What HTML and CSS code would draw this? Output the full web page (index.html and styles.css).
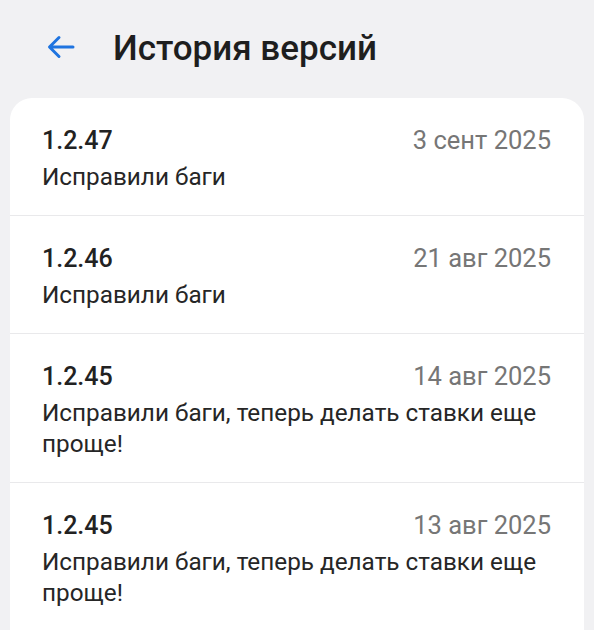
FILE: index.html
```html
<!DOCTYPE html>
<html lang="ru">
<head>
  <meta charset="utf-8">
  <title>История версий</title>
  <link rel="stylesheet" href="styles.css">
</head>
<body>
  <div class="topbar">
    <svg class="back" width="30" height="26" viewBox="0 0 30 26">
      <path d="M27 13H4M13 3.5L3.5 13L13 22.5" fill="none" stroke="#1f74e0" stroke-width="3" stroke-linecap="round" stroke-linejoin="round"/>
    </svg>
    <h1 class="title">История версий</h1>
  </div>

  <div class="card">
    <div class="item">
      <div class="item-head">
        <span class="ver">1.2.47</span>
        <span class="date">3 сент 2025</span>
      </div>
      <p class="desc">Исправили баги</p>
    </div>
    <div class="item">
      <div class="item-head">
        <span class="ver">1.2.46</span>
        <span class="date">21 авг 2025</span>
      </div>
      <p class="desc">Исправили баги</p>
    </div>
    <div class="item">
      <div class="item-head">
        <span class="ver">1.2.45</span>
        <span class="date">14 авг 2025</span>
      </div>
      <p class="desc">Исправили баги, теперь делать ставки еще проще!</p>
    </div>
    <div class="item">
      <div class="item-head">
        <span class="ver">1.2.45</span>
        <span class="date">13 авг 2025</span>
      </div>
      <p class="desc">Исправили баги, теперь делать ставки еще проще!</p>
    </div>
  </div>
</body>
</html>
```

FILE: styles.css
```css
html, body {
  margin: 0;
  height: 100%;
}

body {
  background: #f1f1f3;
  font-family: Roboto, "Liberation Sans", sans-serif;
  color: #212121;
  overflow: hidden;
}

.topbar {
  height: 98px;
  display: flex;
  align-items: center;
  padding-left: 46px;
  box-sizing: border-box;
}

.back {
  display: block;
  margin-top: -4px;
}

.title {
  margin: -2px 0 0 37px;
  font-size: 35px;
  font-weight: 500;
  color: #1e1e1e;
  line-height: 1;
}

.card {
  background: #fff;
  margin: 0 10px;
  border-radius: 22px 22px 0 0;
  min-height: 540px;
}

.item {
  padding: 26px 33px 23px 32px;
  border-bottom: 1px solid #e9e9eb;
}

.item-head {
  display: flex;
  justify-content: space-between;
  align-items: baseline;
  line-height: 32px;
  margin-bottom: 4px;
}

.ver {
  font-size: 25px;
  font-weight: 500;
  color: #222;
}

.date {
  font-size: 25.5px;
  color: #767676;
}

.desc {
  margin: 0;
  font-size: 24.3px;
  line-height: 31px;
  color: #262626;
  padding-right: 10px;
}
```
